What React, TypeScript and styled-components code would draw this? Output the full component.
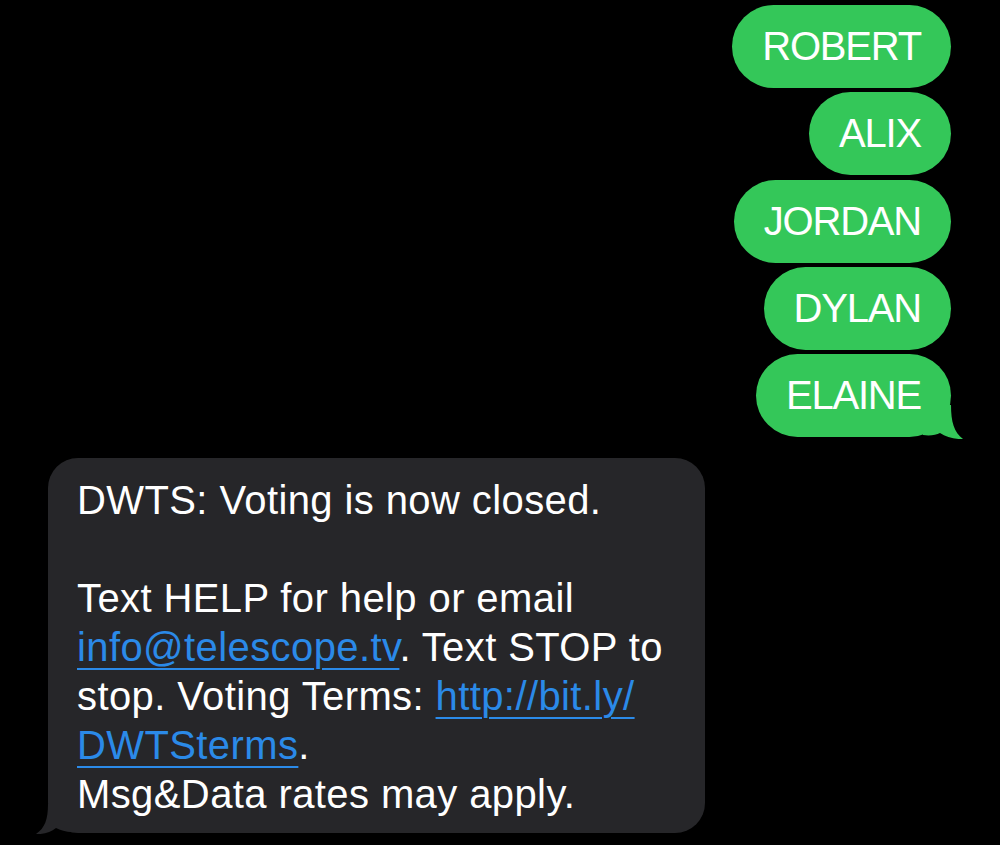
import React from 'react';
import styled, { createGlobalStyle } from 'styled-components';

const GlobalStyle = createGlobalStyle`
  html, body {
    margin: 0;
    padding: 0;
    background: #000;
  }
  body {
    font-family: "Liberation Sans", Arial, sans-serif;
    -webkit-font-smoothing: antialiased;
  }
`;

const Page = styled.div`
  min-height: 845px;
  background: #000;
  display: flex;
  flex-direction: column;
  padding-top: 5px;
  box-sizing: border-box;
  overflow: hidden;
`;

const SentGroup = styled.div`
  display: flex;
  flex-direction: column;
  align-items: flex-end;
  gap: 4.25px;
  padding-right: 49px;
`;

const SentBubble = styled.div`
  position: relative;
  height: 83px;
  display: flex;
  align-items: center;
  padding: 0 30px;
  border-radius: 42px;
  background: #34c759;
  color: #fff;
  font-size: 40px;
  letter-spacing: -1.2px;
`;

const SentTail = styled.svg`
  position: absolute;
  right: -12px;
  bottom: -2px;
  width: 40px;
  height: 34px;
  fill: #34c759;
`;

const Received = styled.div`
  position: relative;
  margin: 21px 0 0 48px;
  width: 657px;
  box-sizing: border-box;
  padding: 18px 20px 14px 29px;
  border-radius: 30px;
  background: #262629;
  color: #fff;
  font-size: 40px;
  line-height: 49px;
  letter-spacing: 0.4px;
  white-space: nowrap;
`;

const Para = styled.p<{ $gap?: boolean }>`
  margin: 0 0 ${(p) => (p.$gap ? '49px' : '0')};
`;

const Link = styled.a`
  color: #2b8ae8;
  text-decoration: underline;
  text-decoration-thickness: 2px;
  text-underline-offset: 7px;
`;

const ReceivedTail = styled.svg`
  position: absolute;
  left: -12px;
  bottom: -1px;
  width: 36px;
  height: 30px;
  fill: #262629;
`;

const names = ['ROBERT', 'ALIX', 'JORDAN', 'DYLAN', 'ELAINE'];

const App = () => {
  return (
    <Page>
      <GlobalStyle />
      <SentGroup>
        {names.map((name, i) => (
          <SentBubble key={name}>
            {name}
            {i === names.length - 1 && (
              <SentTail viewBox="0 0 40 34">
                <path d="M0 0 L28 0 C28 17 31 27 40 34 C31 34.5 23 32 17 28 C13 30 7 31 0 30 Z" />
              </SentTail>
            )}
          </SentBubble>
        ))}
      </SentGroup>
      <Received>
        <Para $gap>DWTS: Voting is now closed.</Para>
        <Para>
          Text HELP for help or email
          <br />
          <Link href="#">info@telescope.tv</Link>. Text STOP to
          <br />
          stop. Voting Terms: <Link href="#">http://bit.ly/</Link>
          <br />
          <Link href="#">DWTSterms</Link>.
          <br />
          Msg&amp;Data rates may apply.
        </Para>
        <ReceivedTail viewBox="0 0 36 30">
          <path d="M36 0 L12 0 C12 15 9 24 0 30 C9 30.5 15 28 20 24 C24 26 30 28 36 28 Z" />
        </ReceivedTail>
      </Received>
    </Page>
  );
};

export default App;
